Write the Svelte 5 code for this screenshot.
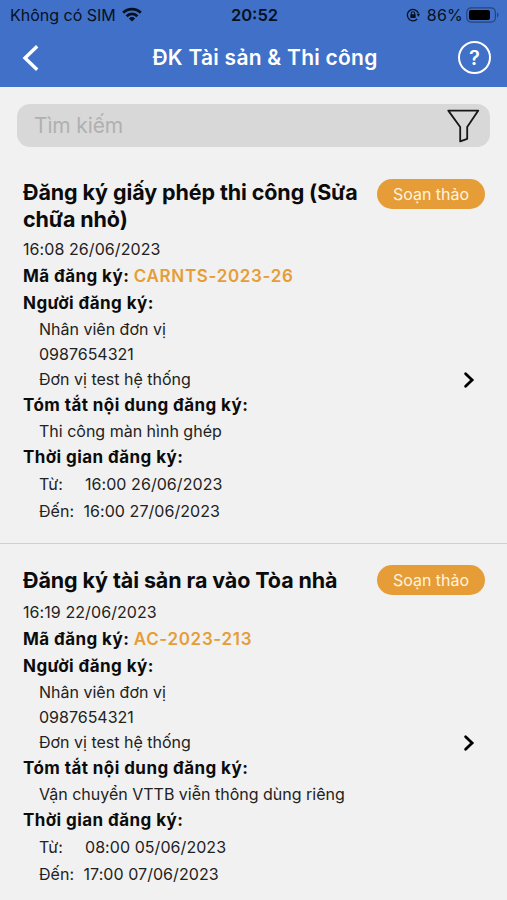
<script lang="ts">
  const registrations = [
    {
      title: "Đăng ký giấy phép thi công (Sửa chữa nhỏ)",
      status: "Soạn thảo",
      createdAt: "16:08 26/06/2023",
      code: "CARNTS-2023-26",
      person: ["Nhân viên đơn vị", "0987654321", "Đơn vị test hệ thống"],
      summary: "Thi công màn hình ghép",
      from: "16:00 26/06/2023",
      to: "16:00 27/06/2023",
    },
    {
      title: "Đăng ký tài sản ra vào Tòa nhà",
      status: "Soạn thảo",
      createdAt: "16:19 22/06/2023",
      code: "AC-2023-213",
      person: ["Nhân viên đơn vị", "0987654321", "Đơn vị test hệ thống"],
      summary: "Vận chuyển VTTB viễn thông dùng riêng",
      from: "08:00 05/06/2023",
      to: "17:00 07/06/2023",
    },
  ];
</script>

<div class="screen">
  <header>
    <div class="status-bar">
      <div class="carrier">
        <span class="carrier-name">Không có SIM</span>
        <svg class="wifi" viewBox="0 0 20 15" width="20" height="15">
          <g fill="none" stroke="currentColor" stroke-width="2.8">
            <path d="M1.2 5.7a12.4 12.4 0 0 1 17.6 0" />
            <path d="M4.6 9.2a7.6 7.6 0 0 1 10.8 0" />
          </g>
          <path d="M10 14.5l-3.1-3.1a4.4 4.4 0 0 1 6.2 0z" fill="currentColor" />
        </svg>
      </div>
      <span class="clock">20:52</span>
      <div class="power">
        <svg class="lock" viewBox="0 0 14 14" width="14" height="14">
          <g fill="none" stroke="currentColor">
            <path d="M12.4 5.2A5.7 5.7 0 1 0 11.2 11" stroke-width="1.3" />
            <path d="M5.3 6.7V5.4a1.7 1.7 0 0 1 3.4 0v1.3" stroke-width="1.1" />
          </g>
          <rect x="4.3" y="6.2" width="5.4" height="3.8" rx="0.7" fill="currentColor" />
          <path d="M10.6 5.8h3.4l-1.5 2.9z" fill="currentColor" />
        </svg>
        <span class="percent">86%</span>
        <svg class="battery" viewBox="0 0 33 16" width="33" height="16">
          <rect x="0.8" y="0.8" width="28.6" height="14.4" rx="4.4" fill="none" stroke="currentColor" stroke-opacity="0.45" stroke-width="1.2" />
          <rect x="3" y="3" width="21" height="10" rx="2" fill="#000" />
          <path d="M31 5.6c2 .8 2 4 0 4.8z" fill="currentColor" fill-opacity="0.45" />
        </svg>
      </div>
    </div>
    <div class="nav-bar">
      <button class="back" aria-label="Quay lại">
        <svg viewBox="0 0 18 28" width="18" height="28">
          <path d="M15.2 2.2L3 14l12.2 11.8" fill="none" stroke="currentColor" stroke-width="3.4" />
        </svg>
      </button>
      <h1>ĐK Tài sản &amp; Thi công</h1>
      <button class="help" aria-label="Trợ giúp">?</button>
    </div>
  </header>

  <div class="search">
    <input type="text" placeholder="Tìm kiếm" />
    <svg viewBox="0 0 34 34" width="34" height="34">
      <path d="M2.3 1.6h30L21.2 18v11.8l-7 2.6V18z" fill="none" stroke="#161616" stroke-width="1.8" stroke-linejoin="round" />
    </svg>
  </div>

  {#each registrations as item}
    <article>
      <div class="heading">
        <h2>{item.title}</h2>
        <span class="badge">{item.status}</span>
      </div>
      <p class="row date">{item.createdAt}</p>
      <p class="row label">Mã đăng ký: <span class="code">{item.code}</span></p>
      <p class="row label">Người đăng ký:</p>
      <div class="person">
        {#each item.person as line}
          <p class="detail">{line}</p>
        {/each}
        <svg viewBox="0 0 12 18" width="12" height="18">
          <path d="M2.6 2.8L9.1 9l-6.5 6.2" fill="none" stroke="#000" stroke-width="2.8" stroke-linecap="round" />
        </svg>
      </div>
      <p class="row label">Tóm tắt nội dung đăng ký:</p>
      <p class="detail">{item.summary}</p>
      <p class="row label">Thời gian đăng ký:</p>
      <p class="row time"><span class="from">Từ:</span>{item.from}</p>
      <p class="row time"><span class="to">Đến:</span>{item.to}</p>
    </article>
  {/each}
</div>

<style>
  :global(body) {
    background: #f1f1f1;
  }

  .screen {
    height: 900px;
    overflow: hidden;
    background: #f1f1f1;
    color: #222;
    font-family: Inter, "Liberation Sans", sans-serif;
    font-size: 16px;
  }

  h1,
  h2,
  p {
    margin: 0;
  }

  button {
    padding: 0;
    border: none;
    background: none;
    color: #fff;
    font-family: inherit;
  }

  header {
    height: 87px;
    background: #4070c8;
  }

  .status-bar {
    display: grid;
    grid-template-columns: 1fr auto 1fr;
    align-items: center;
    height: 29px;
    padding: 0 8px 0 10px;
    color: #06101f;
  }

  .carrier,
  .power {
    display: flex;
    align-items: center;
  }

  .carrier-name {
    font-size: 16px;
  }

  .wifi {
    margin-left: 6px;
  }

  .clock {
    font-size: 16.5px;
    font-weight: 600;
  }

  .power {
    justify-content: flex-end;
  }

  .percent {
    margin: 0 3px 0 7px;
    font-size: 16px;
    letter-spacing: 0.2px;
  }

  .nav-bar {
    display: flex;
    align-items: center;
    height: 57px;
    padding: 0 16px 0 22px;
  }

  .back {
    display: flex;
    width: 50px;
  }

  h1 {
    flex: 1;
    padding-left: 47px;
    color: #fff;
    font-size: 21px;
    font-weight: 600;
    letter-spacing: 0.25px;
    text-align: center;
    white-space: nowrap;
  }

  .help {
    width: 33px;
    height: 33px;
    margin-left: 47px;
    border: 2px solid #fff;
    border-radius: 50%;
    font-size: 20px;
    font-weight: 600;
    line-height: 28px;
  }

  .search {
    display: flex;
    align-items: center;
    justify-content: space-between;
    box-sizing: border-box;
    height: 43px;
    margin: 17px 17px 10.5px;
    padding: 0 10px 0 17px;
    border-radius: 13px;
    background: #d8d8d8;
  }

  .search input {
    width: 300px;
    padding: 0;
    border: none;
    outline: none;
    background: none;
    font: inherit;
    font-size: 21px;
    letter-spacing: -0.15px;
  }

  .search input::placeholder {
    color: #b0b0b0;
  }

  article {
    padding: 21.5px 22px 17.5px 23px;
  }

  article + article {
    padding-top: 21px;
    border-top: 1px solid #d0d0d0;
  }

  .heading {
    display: flex;
    align-items: center;
    justify-content: space-between;
    min-height: 31px;
    margin-bottom: 3px;
  }

  h2 {
    width: 345px;
    color: #0b0b0b;
    font-size: 21.5px;
    font-weight: 700;
    letter-spacing: -0.1px;
    line-height: 27px;
  }

  .badge {
    align-self: flex-start;
    width: 108px;
    height: 30px;
    border-radius: 15px;
    background: #e69d38;
    color: #fff3df;
    font-size: 16px;
    line-height: 30px;
    text-align: center;
  }

  .row {
    line-height: 27px;
  }

  .date {
    letter-spacing: 0.08px;
  }

  .label {
    color: #0b0b0b;
    font-size: 17px;
    font-weight: 700;
    letter-spacing: 0.43px;
  }

  .code {
    color: #e69d38;
    font-weight: 600;
    letter-spacing: 0.67px;
  }

  .person {
    position: relative;
  }

  .person svg {
    position: absolute;
    top: 54px;
    right: 10px;
  }

  .detail {
    padding-left: 16px;
    line-height: 25px;
  }

  .time {
    padding-left: 16px;
    letter-spacing: 0.06px;
  }

  .time span {
    display: inline-block;
  }

  .from {
    width: 46px;
  }

  .to {
    width: 44.5px;
  }
</style>
